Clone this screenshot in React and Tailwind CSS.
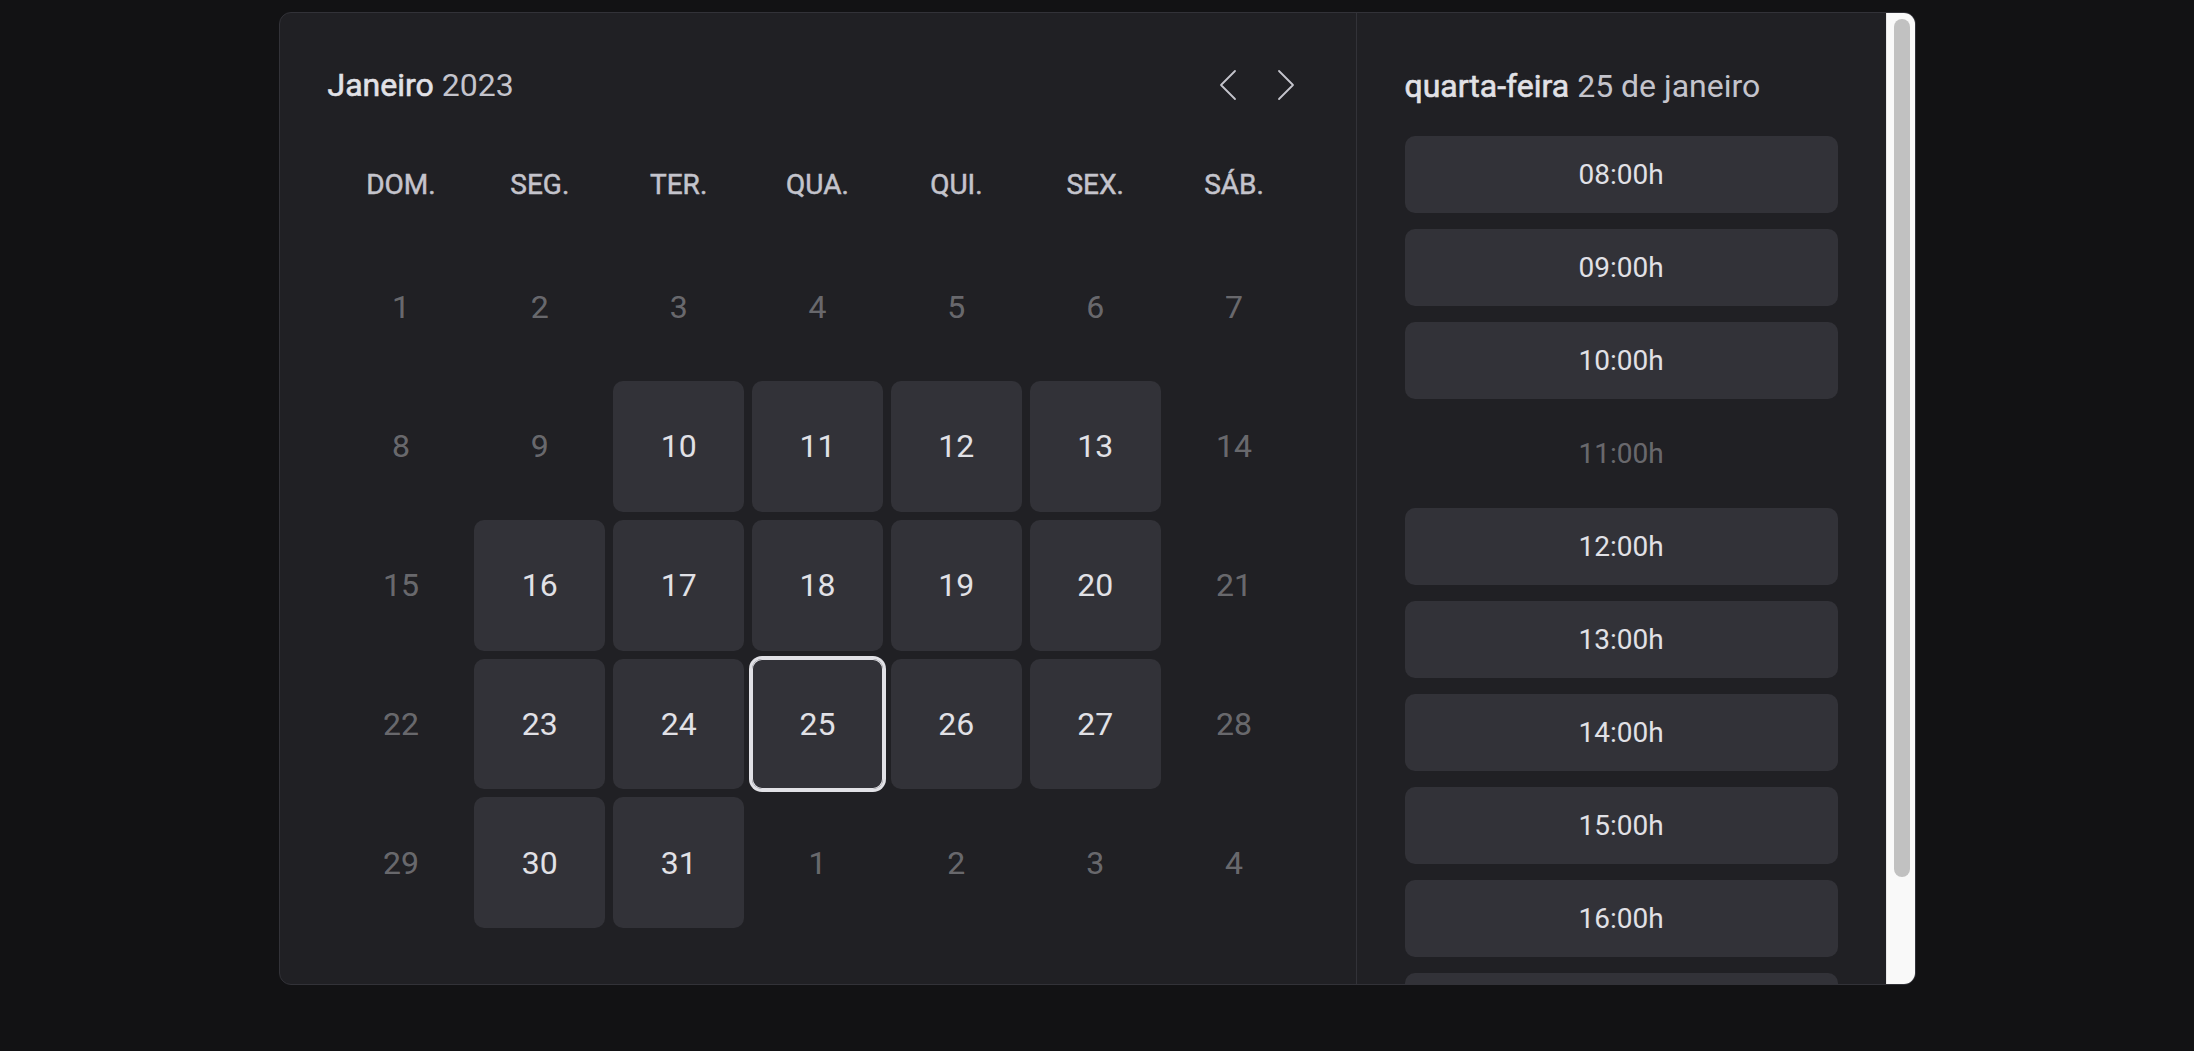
import { useState } from 'react';

const weekDays = ['DOM.', 'SEG.', 'TER.', 'QUA.', 'QUI.', 'SEX.', 'SÁB.'];

const available = [10, 11, 12, 13, 16, 17, 18, 19, 20, 23, 24, 25, 26, 27, 30, 31];

const buildDays = () => {
    const days = [];
    for (let d = 1; d <= 31; d++) days.push({ day: d, disabled: !available.includes(d) });
    for (let d = 1; d <= 4; d++) days.push({ day: d, disabled: true, next: true });
    return days;
};

const hours = [8, 9, 10, 11, 12, 13, 14, 15, 16, 17];
const blockedHours = [11];

const Caret = ({ dir }) => (
    <svg width='18' height='32' viewBox='0 0 18 32' fill='none'>
        <polyline
            points={dir === 'left' ? '16,2 2,16 16,30' : '2,2 16,16 2,30'}
            stroke='#c4c4cc'
            strokeWidth='1.8'
            strokeLinecap='round'
            strokeLinejoin='round'
        />
    </svg>
);

const App = () => {
    const [selected, setSelected] = useState(25);
    const days = buildDays();

    return (
        <div className='min-h-screen w-full bg-[#121214] pt-[12px]' style={{ fontFamily: 'Roboto, "Noto Sans", sans-serif' }}>
            <div className='mx-auto flex w-[1637px] overflow-hidden rounded-xl border border-[#323238] bg-[#202024]'>
                {/* Calendar */}
                <div className='w-[1077px] shrink-0 border-r border-[#323238] px-12 pt-12 pb-14'>
                    <div className='flex h-[48px] items-center justify-between'>
                        <h2 className='text-[32px] leading-[48px] font-normal text-[#e1e1e6] [-webkit-text-stroke:0.6px_#e1e1e6]'>
                            Janeiro <span className='text-[#c4c4cc] [-webkit-text-stroke:0]'>2023</span>
                        </h2>
                        <div className='mr-[3px] flex items-center gap-[20px]'>
                            <button className='flex h-[40px] w-[38px] items-center justify-center'>
                                <Caret dir='left' />
                            </button>
                            <button className='flex h-[40px] w-[38px] items-center justify-center'>
                                <Caret dir='right' />
                            </button>
                        </div>
                    </div>

                    <div className='mt-[55px] grid h-[40px] grid-cols-7 items-center gap-2 px-2'>
                        {weekDays.map(w => (
                            <span key={w} className='text-center text-[28px] font-normal text-[#c4c4cc] [-webkit-text-stroke:0.5px_#c4c4cc]'>{w}</span>
                        ))}
                    </div>

                    <div className='mt-[38px] grid grid-cols-7 gap-2 px-2'>
                        {days.map((d, i) => (
                            <button
                                key={i}
                                disabled={d.disabled}
                                onClick={() => setSelected(d.day)}
                                className={`flex aspect-square items-center justify-center rounded-[10px] text-[32px] ${d.disabled
                                    ? 'text-[#e1e1e6]/40'
                                    : 'bg-[#323238] text-[#e1e1e6]'} ${!d.disabled && selected === d.day ? 'shadow-[0_0_0_3px_#e1e1e6,inset_0_0_0_1px_#e1e1e6]' : ''}`}
                            >
                                {d.day}
                            </button>
                        ))}
                    </div>
                </div>

                {/* Time picker */}
                <div className='flex flex-1'>
                    <div className='h-0 min-h-full flex-1 overflow-hidden pt-[49px] px-12'>
                        <h3 className='h-[48px] text-[32px] leading-[48px] font-normal text-[#e1e1e6] [-webkit-text-stroke:0.6px_#e1e1e6]'>
                            quarta-feira <span className='text-[#c4c4cc] [-webkit-text-stroke:0]'>25 de janeiro</span>
                        </h3>
                        <div className='mt-[26px] flex flex-col gap-4'>
                            {hours.map(h => {
                                const off = blockedHours.includes(h);
                                return (
                                    <button
                                        key={h}
                                        disabled={off}
                                        className={`h-[77px] w-full shrink-0 rounded-[10px] text-center text-[28px] ${off ? 'text-[#e1e1e6]/40' : 'bg-[#323238] text-[#e1e1e6]'}`}
                                    >
                                        {String(h).padStart(2, '0')}:00h
                                    </button>
                                );
                            })}
                        </div>
                    </div>
                    {/* scrollbar */}
                    <div className='w-[29px] shrink-0 border-l border-[#e8e8e8] bg-[#f9f9f9] pt-[6px] pl-[7px]'>
                        <div className='h-[858px] w-[16px] rounded-full bg-[#c1c1c1]' />
                    </div>
                </div>
            </div>
        </div>
    );
};

export default App;
